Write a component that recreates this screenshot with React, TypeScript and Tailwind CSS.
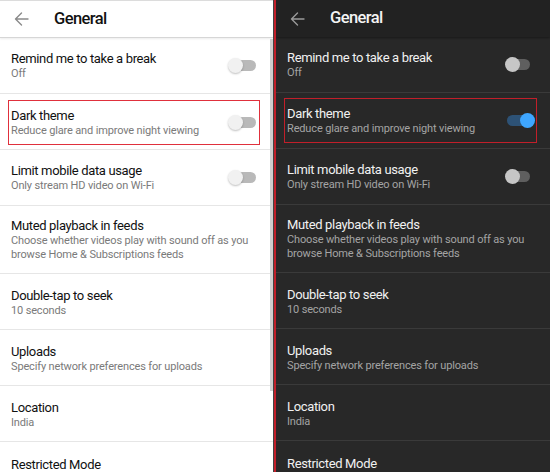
import React from "react";

type Row = { title: string; sub: string[]; toggle?: boolean; highlight?: boolean };

const rows: Row[] = [
  { title: "Remind me to take a break", sub: ["Off"], toggle: true },
  { title: "Dark theme", sub: ["Reduce glare and improve night viewing"], toggle: true, highlight: true },
  { title: "Limit mobile data usage", sub: ["Only stream HD video on Wi-Fi"], toggle: true },
  {
    title: "Muted playback in feeds",
    sub: ["Choose whether videos play with sound off as you", "browse Home & Subscriptions feeds"],
  },
  { title: "Double-tap to seek", sub: ["10 seconds"] },
  { title: "Uploads", sub: ["Specify network preferences for uploads"] },
  { title: "Location", sub: ["India"] },
  { title: "Restricted Mode", sub: [] },
];

function Arrow({ color }: { color: string }) {
  return (
    <svg width="15" height="14" viewBox="0 0 15 14" fill="none">
      <path d="M14 7H1.5M7.5 1L1.5 7l6 6" stroke={color} strokeWidth="1.4" strokeLinecap="round" strokeLinejoin="round" />
    </svg>
  );
}

function Toggle({ dark, on }: { dark: boolean; on: boolean }) {
  if (!dark) {
    return (
      <div className="relative w-[30px] h-[16px] flex items-center">
        <div className="ml-[3px] w-[25px] h-[11px] rounded-full bg-[#b9b9b9]" />
        <div className="absolute left-0 top-[0.5px] w-[15px] h-[15px] rounded-full bg-[#f1f1f1] shadow-[0_1px_2px_rgba(0,0,0,0.25)]" />
      </div>
    );
  }
  if (on) {
    return (
      <div className="relative w-[30px] h-[16px] flex items-center">
        <div className="ml-[2px] w-[24px] h-[11px] rounded-full bg-[#2d5276]" />
        <div className="absolute right-0 top-[0.5px] w-[15px] h-[15px] rounded-full bg-[#3ea6ff]" />
      </div>
    );
  }
  return (
    <div className="relative w-[30px] h-[16px] flex items-center">
      <div className="ml-[3px] w-[22px] h-[11px] rounded-full bg-[#5f5f5f]" />
      <div className="absolute left-0 top-[0.5px] w-[15px] h-[15px] rounded-full bg-[#c6c6c6]" />
    </div>
  );
}

function Panel({ dark }: { dark: boolean }) {
  const titleColor = dark ? "text-[#f1f1f1]" : "text-[#111111]";
  const subColor = dark ? "text-[#a4a4a4]" : "text-[#7a7a7a]";
  const divider = dark ? "border-[#3a3a3a]" : "border-[#e6e6e6]";
  return (
    <div className={dark ? "flex-1 flex flex-col bg-[#282828] overflow-hidden" : "relative w-[273px] flex flex-col bg-white border-t border-[#dcdcdc] overflow-hidden"}>
      <div
        className={
          dark
            ? "h-[37px] shrink-0 flex items-center bg-[#222222] pl-[14px] shadow-[0_1px_2px_rgba(0,0,0,0.4)]"
            : "h-[37px] shrink-0 flex items-center bg-white pl-[14px] border-b border-[#d6d6d6] shadow-[0_1px_2px_rgba(0,0,0,0.08)]"
        }
      >
        <Arrow color={dark ? "#9a9a9a" : "#8a8a8a"} />
        <span className={`ml-[25px] text-[16.5px] tracking-[-0.6px] font-medium ${dark ? "text-[#f4f4f4]" : "text-[#111111]"}`}>General</span>
      </div>
      {rows.map((r, i) => {
        const last = r.sub.length === 0;
        return (
          <div
            key={i}
            className={`${r.sub.length > 1 ? "h-[68px]" : "h-[56px]"} shrink-0 flex ${last ? "items-start pt-[14px]" : "items-center"} pl-[8px] pr-[13px] border-b ${divider}`}
          >
            <div
              className={`flex-1 flex items-center pl-[2px] pr-[1px] border ${
                r.highlight ? (dark ? "border-[#c21f2a] h-[45px]" : "border-[#e0303c] h-[45px] mt-[2px]") : "border-transparent"
              }`}
            >
              <div className={`flex-1 flex flex-col ${i > 3 && !last ? "pt-[2px]" : ""}`}>
                <div className={`text-[13px] leading-[16px] tracking-[-0.35px] ${titleColor}`}>{r.title}</div>
                {r.sub.map((s, j) => (
                  <div key={j} className={`text-[11px] leading-[14px] tracking-[-0.15px] ${subColor}`}>
                    {s}
                  </div>
                ))}
              </div>
              {r.toggle && <Toggle dark={dark} on={dark && !!r.highlight} />}
            </div>
          </div>
        );
      })}
      {!dark && <div className="absolute right-0 top-[38px] w-[3px] h-[352px] bg-[#cfcfcf]" />}
    </div>
  );
}

export default function App() {
  return (
    <div className="w-[550px] h-[472px] flex overflow-hidden font-['Roboto',sans-serif]">
      <Panel dark={false} />
      <div className="w-px bg-[#444444]" />
      <div className="w-[2px] bg-[#c21f2a]" />
      <Panel dark={true} />
    </div>
  );
}
